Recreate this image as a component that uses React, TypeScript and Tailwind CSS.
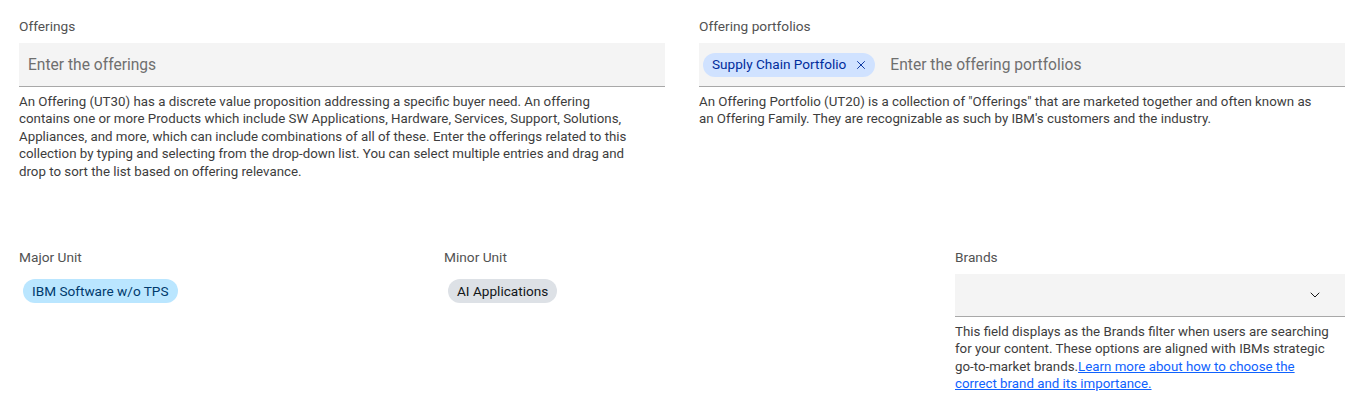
import { ChevronDown, X } from "lucide-react";

const font = { fontFamily: "Roboto, 'Liberation Sans', sans-serif" };

function Label({ children }: { children: React.ReactNode }) {
  return <div className="text-[13.7px] leading-[18px] text-[#525252] mb-[8px]">{children}</div>;
}

function Helper({ children }: { children: React.ReactNode }) {
  return <div className="text-[13.3px] leading-[17.4px] text-[#3d3d3d] mt-[6px] whitespace-nowrap">{children}</div>;
}

export default function App() {
  return (
    <div className="bg-white w-[1364px] h-[413px] px-[19px] pt-[17px]" style={font}>
      <div className="grid grid-cols-2 gap-[34px]">
        <div>
          <Label>Offerings</Label>
          <div className="h-[44px] bg-[#f4f4f4] border-b border-[#a8a8a8] flex items-center px-[9px] pt-[3px]">
            <span className="text-[15.6px] text-[#6f6f6f]">Enter the offerings</span>
          </div>
          <Helper>
            An Offering (UT30) has a discrete value proposition addressing a specific buyer need. An offering
            <br />
            contains one or more Products which include SW Applications, Hardware, Services, Support, Solutions,
            <br />
            Appliances, and more, which can include combinations of all of these. Enter the offerings related to this
            <br />
            collection by typing and selecting from the drop-down list. You can select multiple entries and drag and
            <br />
            drop to sort the list based on offering relevance.
          </Helper>
        </div>
        <div>
          <Label>Offering portfolios</Label>
          <div className="h-[44px] bg-[#f4f4f4] border-b border-[#a8a8a8] flex items-center pl-[4px]">
            <span className="h-[24px] rounded-full bg-[#d0e2ff] text-[#002d9c] text-[13.6px] flex items-center pl-[9px] pr-[7px] gap-[8px]">
              Supply Chain Portfolio
              <X size={14} strokeWidth={1.6} />
            </span>
            <span className="text-[15.6px] text-[#6f6f6f] ml-[15px] pt-[3px]">Enter the offering portfolios</span>
          </div>
          <Helper>
            An Offering Portfolio (UT20) is a collection of "Offerings" that are marketed together and often known as
            <br />
            an Offering Family. They are recognizable as such by IBM's customers and the industry.
          </Helper>
        </div>
      </div>

      <div className="grid grid-cols-[425px_511px_1fr] mt-[68px]">
        <div>
          <Label>Major Unit</Label>
          <span className="inline-flex h-[24px] items-center rounded-full bg-[#bae6ff] text-[#003a6d] text-[13.6px] px-[9px] ml-[4px] mt-[5px]">
            IBM Software w/o TPS
          </span>
        </div>
        <div>
          <Label>Minor Unit</Label>
          <span className="inline-flex h-[24px] items-center rounded-full bg-[#dde1e6] text-[#121619] text-[13.6px] px-[9px] ml-[4px] mt-[5px]">
            AI Applications
          </span>
        </div>
        <div>
          <Label>Brands</Label>
          <div className="h-[43px] bg-[#f4f4f4] border-b border-[#a8a8a8] flex items-center justify-end pr-[22px]">
            <ChevronDown size={16} strokeWidth={1.5} className="text-[#161616]" />
          </div>
          <Helper>
            This field displays as the Brands filter when users are searching
            <br />
            for your content. These options are aligned with IBMs strategic
            <br />
            go-to-market brands.
            <a href="#" className="text-[#0f62fe] underline">
              Learn more about how to choose the
              <br />
              correct brand and its importance.
            </a>
          </Helper>
        </div>
      </div>
    </div>
  );
}
